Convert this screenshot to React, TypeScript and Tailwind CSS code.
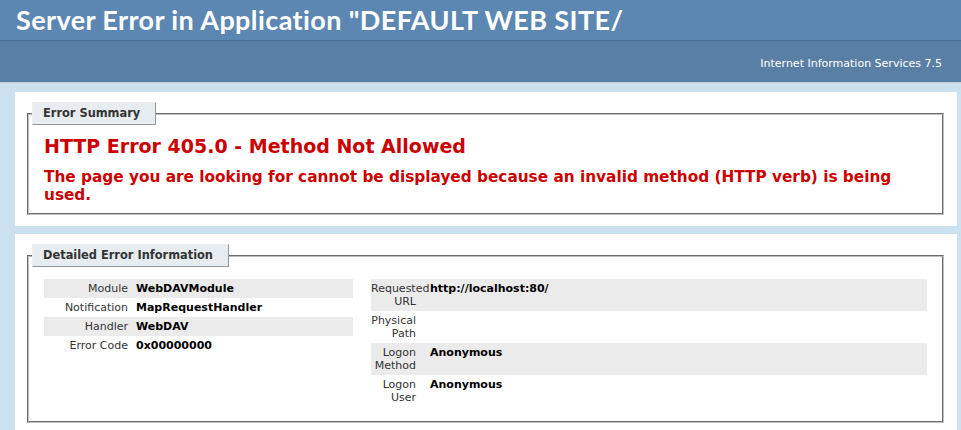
export default function App() {
  const left = [
    { k: "Module", v: "WebDAVModule", alt: true },
    { k: "Notification", v: "MapRequestHandler", alt: false },
    { k: "Handler", v: "WebDAV", alt: true },
    { k: "Error Code", v: "0x00000000", alt: false },
  ];
  const right = [
    { k: "Requested URL", v: "http://localhost:80/", alt: true },
    { k: "Physical Path", v: "", alt: false },
    { k: "Logon Method", v: "Anonymous", alt: true },
    { k: "Logon User", v: "Anonymous", alt: false },
  ];
  return (
    <div className="min-h-screen bg-[#CBE1EF] text-black font-['DejaVu_Sans',Verdana,sans-serif] text-[11px] leading-[13px]">
      <div className="h-[40px] bg-[#5C87B2] pl-[16px] flex items-center">
        <h1 className="text-white font-bold text-[27px] leading-[30px] tracking-[0.4px] font-['Lato',sans-serif] whitespace-nowrap">
          Server Error in Application "DEFAULT WEB SITE/
        </h1>
      </div>
      <div className="h-[43px] border-t border-b border-t-[#4A6C8E] border-b-[#C1CFDD] bg-[#5A7FA5] pr-[19px] pt-[16px] text-right text-white">
        Internet Information Services 7.5
      </div>
      <div className="ml-[15px] w-[942px]">
        <div className="mt-[9px] bg-white pt-[10px] pl-[12px] pr-[13px] pb-[11px]">
          <fieldset className="border-2 [border-style:groove] border-[#c0c0c0] px-[15px] pb-[9px]">
            <legend className="ml-[-12px] bg-[#E7ECF0] border border-t-[#EDEDED] border-l-[#EDEDED] border-r-[#969696] border-b-[#969696] pt-[4px] pb-[4px] pl-[10px] pr-[15px] text-[#333333] font-bold text-[11.4px] leading-[13px]">
              Error Summary
            </legend>
            <h2 className="mt-[10px] text-[19px] leading-[22px] font-bold text-[#CC0000]">
              HTTP Error 405.0 - Method Not Allowed
            </h2>
            <h3 className="mt-[11px] text-[15.3px] leading-[18px] font-bold text-[#CC0000] max-w-[870px]">
              The page you are looking for cannot be displayed because an invalid method (HTTP verb) is being used.
            </h3>
          </fieldset>
        </div>
        <div className="mt-[8px] bg-white pt-[10px] pl-[12px] pr-[13px] pb-[11px]">
          <fieldset className="border-2 [border-style:groove] border-[#c0c0c0] px-[15px] pb-[14px]">
            <legend className="ml-[-12px] bg-[#E7ECF0] border border-t-[#EDEDED] border-l-[#EDEDED] border-r-[#969696] border-b-[#969696] pt-[4px] pb-[4px] pl-[10px] pr-[15px] text-[#333333] font-bold text-[11.4px] leading-[13px]">
              Detailed Error Information
            </legend>
            <div className="mt-[12px] flex gap-[18px]">
              <div className="w-[309px] shrink-0">
                {left.map((r) => (
                  <div key={r.k} className={`grid grid-cols-[92px_1fr] py-[3px] ${r.alt ? "bg-[#ebebeb]" : ""}`}>
                    <div className="text-right pr-[8px] text-[#333]">{r.k}</div>
                    <div className="font-bold">{r.v}</div>
                  </div>
                ))}
              </div>
              <div className="flex-1">
                {right.map((r) => (
                  <div key={r.k} className={`grid grid-cols-[59px_1fr] py-[3px] ${r.alt ? "bg-[#ebebeb]" : ""}`}>
                    <div className="text-right pr-[14px] text-[#333] min-h-[26px]">{r.k}</div>
                    <div className="font-bold">{r.v}</div>
                  </div>
                ))}
              </div>
            </div>
          </fieldset>
        </div>
      </div>
    </div>
  );
}
